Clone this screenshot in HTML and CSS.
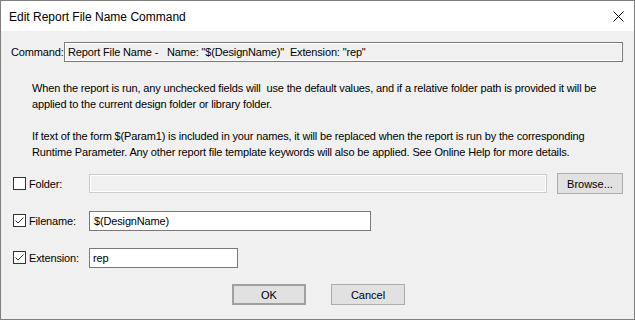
FILE: index.html
```html
<!DOCTYPE html>
<html lang="en">
  <head>
    <meta charset="UTF-8" />
    <title>Edit Report File Name Command</title>
    <link rel="stylesheet" href="styles.css">
  </head>
  <body>
    <div class="window">
      <div class="titlebar">
        <span class="title">Edit Report File Name Command</span>
        <svg class="close" width="11" height="11" viewBox="0 0 11 11">
          <path d="M0.5 0.5 L10.5 10.5 M10.5 0.5 L0.5 10.5" stroke="#000" stroke-width="1" fill="none" />
        </svg>
      </div>

      <div class="dialog">
        <div class="command-row">
          <span class="command-label">Command:</span>
          <div class="field readonly">Report File Name -&nbsp;&nbsp; Name: "$(DesignName)"&nbsp; Extension: "rep"</div>
        </div>

        <div class="info">
          <p>
            When the report is run, any unchecked fields will&nbsp; use the default values, and if a relative folder path is provided it will be
            applied to the current design folder or library folder.
          </p>
          <p>
            If text of the form $(Param1) is included in your names, it will be replaced when the report is run by the corresponding
            Runtime Parameter. Any other report file template keywords will also be applied. See Online Help for more details.
          </p>
        </div>

        <div class="option-row folder-row">
          <span class="checkbox"></span>
          <span class="option-label">Folder:</span>
          <div class="field disabled folder-field"></div>
          <button class="btn browse">Browse...</button>
        </div>

        <div class="option-row filename-row">
          <span class="checkbox checked">
            <svg width="11" height="11" viewBox="0 0 11 11">
              <path d="M1.5 5.5 L4 8 L9.5 2.5" stroke="#333" stroke-width="1" fill="none" />
            </svg>
          </span>
          <span class="option-label">Filename:</span>
          <div class="field filename-field">$(DesignName)</div>
        </div>

        <div class="option-row extension-row">
          <span class="checkbox checked">
            <svg width="11" height="11" viewBox="0 0 11 11">
              <path d="M1.5 5.5 L4 8 L9.5 2.5" stroke="#333" stroke-width="1" fill="none" />
            </svg>
          </span>
          <span class="option-label">Extension:</span>
          <div class="field extension-field">rep</div>
        </div>

        <div class="actions">
          <button class="btn default">OK</button>
          <button class="btn">Cancel</button>
        </div>
      </div>
    </div>
  </body>
</html>
```

FILE: styles.css
```css
:root {
  --face: #f0f0f0;
  --text: #000000;
  --border: #7a7a7a;
  --btn-face: #e1e1e1;
  --btn-border: #adadad;
}

body {
  margin: 0;
  font-family: "Liberation Sans", Arial, sans-serif;
  font-size: 11px;
  letter-spacing: -0.15px;
  color: var(--text);
}

.window {
  width: 635px;
  height: 320px;
  box-sizing: border-box;
  border: 1px solid #7f7f7f;
  background-color: var(--face);
  display: flex;
  flex-direction: column;
}

.titlebar {
  height: 30px;
  background-color: #ffffff;
  display: flex;
  align-items: center;
  justify-content: space-between;
  padding: 0 10px 0 8px;
}

.title {
  font-size: 12px;
  letter-spacing: 0;
  margin-top: 1px;
}

.close {
  margin-top: 1px;
}

.dialog {
  padding: 11px 11px 0 10px;
}

.command-row {
  display: flex;
  align-items: center;
  height: 20px;
}

.command-label {
  width: 53px;
}

.field {
  box-sizing: border-box;
  height: 20px;
  border: 1px solid var(--border);
  background-color: #ffffff;
  padding: 0 3px;
  line-height: 18px;
  white-space: pre;
}

.field.readonly {
  flex: 1;
  background-color: var(--face);
  box-shadow: inset 0 0 0 1px #ffffff;
  padding-left: 3px;
}

.field.disabled {
  border-color: #cccccc;
  background-color: var(--face);
  box-shadow: inset 0 0 0 1px #ffffff;
}

.info {
  padding: 0 0 0 21px;
  margin-top: 18px;
}

.info p {
  margin: 0 0 16px 0;
  line-height: 16px;
}

.option-row {
  display: flex;
  align-items: center;
  height: 21px;
  padding-left: 2px;
}

.folder-row {
  margin-top: -3px;
}

.filename-row {
  margin-top: 16px;
}

.extension-row {
  margin-top: 16px;
}

.checkbox {
  width: 13px;
  height: 13px;
  box-sizing: border-box;
  border: 1px solid #333333;
  background-color: #ffffff;
  display: flex;
  align-items: center;
  justify-content: center;
}

.option-label {
  width: 60px;
  margin-left: 3px;
}

.folder-field {
  width: 458px;
  height: 19px;
}

.filename-field {
  width: 282px;
  padding-left: 4px;
}

.extension-field {
  width: 149px;
  padding-left: 3px;
}

.btn {
  font-family: "Liberation Sans", Arial, sans-serif;
  font-size: 11px;
  color: var(--text);
  background-color: var(--btn-face);
  border: 1px solid var(--btn-border);
  height: 21px;
  padding: 0;
}

.browse {
  width: 66px;
  margin-left: 10px;
}

.actions {
  display: flex;
  justify-content: center;
  gap: 25px;
  margin-top: 16px;
  padding-left: 3px;
}

.actions .btn {
  width: 74px;
  height: 21px;
}

.btn.default {
  border: 2px solid #a0a0a0;
}
```
